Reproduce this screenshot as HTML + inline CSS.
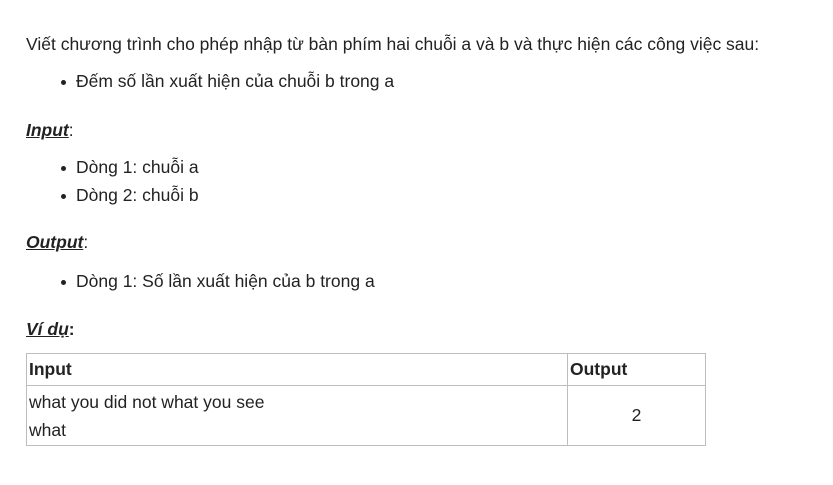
<!DOCTYPE html>
<html><head><meta charset="utf-8"><style>
body{margin:0;width:833px;height:485px;background:#fff;font-family:"Liberation Sans",Arial,sans-serif;font-size:17.5px;color:#222;position:relative;overflow:hidden}
.l{position:absolute;left:26px;line-height:20px;white-space:nowrap}
.b{left:76px}
.b:before{content:"";position:absolute;left:-15px;top:9px;width:5px;height:5px;border-radius:50%;background:#222}
.h{font-weight:bold;font-style:italic;text-decoration:underline}
table{position:absolute;left:26px;top:353px;width:680px;border-collapse:collapse;font-size:17.5px}
td{border:1px solid #bdbdbd;padding:0 2px;vertical-align:middle}
</style></head><body>
<div class="l" style="top:34px">Viết chương trình cho phép nhập từ bàn phím hai chuỗi a và b và thực hiện các công việc sau:</div>
<div class="l b" style="top:71px">Đếm số lần xuất hiện của chuỗi b trong a</div>
<div class="l" style="top:120px"><span class="h">Input</span>:</div>
<div class="l b" style="top:157px">Dòng 1: chuỗi a</div>
<div class="l b" style="top:185px">Dòng 2: chuỗi b</div>
<div class="l" style="top:232px"><span class="h">Output</span>:</div>
<div class="l b" style="top:271px">Dòng 1: Số lần xuất hiện của b trong a</div>
<div class="l" style="top:319px"><span class="h">Ví dụ</span><b>:</b></div>
<table>
<tr style="height:32px"><td style="width:536px"><b>Input</b></td><td><b>Output</b></td></tr>
<tr style="height:60px"><td style="line-height:28px">what you did not what you see<br>what</td><td style="text-align:center">2</td></tr>
</table>
</body></html>
